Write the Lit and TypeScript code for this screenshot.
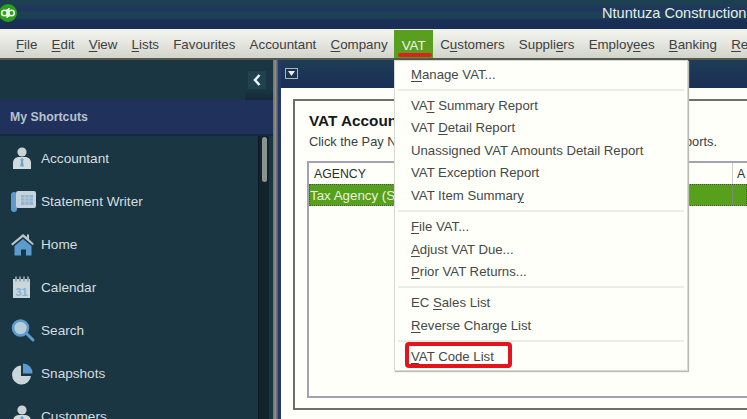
import { LitElement, html, css, svg } from "lit";
import { customElement } from "lit/decorators.js";

const U = (s: string, i: number, n = 1) =>
  html`<span>${s.slice(0, i)}<u>${s.slice(i, i + n)}</u>${s.slice(i + n)}</span>`;

const person = svg`<circle cx="11" cy="5" r="4.6" fill="#c9d3d8"/><path d="M2 22v-6c0-4 3-6 6-6h6c3 0 6 2 6 6v6z" fill="#d3dade"/><path d="M11 11l1.800 1.500-.9 2 1 5h-3.800l1-5-.9-2z" fill="#6ba3cf"/>`;
const icons: Record<string, unknown> = {
  Accountant: person,
  "Statement Writer": svg`<rect x="0" y="2" width="6" height="20" rx="3" fill="#5d9bcb"/><rect x="5" y="1" width="20" height="17" rx="2" fill="#c6d3da"/><rect x="10" y="5" width="12" height="10" fill="#8fb5d3"/><path d="M10 8h12M10 11h12M14 5v10M18 5v10" stroke="#c6d3da" stroke-width=".8"/>`,
  Home: svg`<path d="M0 11L12 1l4 3V1.500h2v4.500l5 5-1.500 1L12 4 1.500 12.500z" fill="#b9c6cc"/><path d="M3.500 13L12 6l8.500 7v9.500h-5.500v-6h-5v6H3.500z" fill="#5c9bcd"/>`,
  Calendar: svg`<rect x="2" y="3" width="17" height="19" fill="#cbd6da"/><path d="M5 .5v5M9 .5v5M13 .5v5M17 .5v5" stroke="#8fa4ae" stroke-width="1.800"/><text x="10.500" y="19.500" text-anchor="middle" font-family="Liberation Sans" font-weight="700" font-size="11" fill="#7fb3d8">31</text>`,
  Search: svg`<path d="M15 14l7 7" stroke="#5c9bcd" stroke-width="3" stroke-linecap="round"/><circle cx="9.500" cy="9" r="7.500" fill="#b7cdd8" stroke="#5c9bcd" stroke-width="2.600"/>`,
  Snapshots: svg`<path d="M10 3.500A9.500 9.500 0 1 0 20 14H10z" fill="#cbd6da"/><path d="M12 1.500A9.500 9.500 0 0 1 21.500 11.500H12z" fill="#5c9bcd"/>`,
  Customers: person,
};
const shortcuts = Object.keys(icons);

const menuGroups: unknown[][] = [
  [U("Manage VAT...", 0)],
  [U("VAT Summary Report", 2), U("VAT Detail Report", 4), "Unassigned VAT Amounts Detail Report", "VAT Exception Report", U("VAT Item Summary", 15)],
  [U("File VAT...", 0), U("Adjust VAT Due...", 0), U("Prior VAT Returns...", 0)],
  [U("EC Sales List", 3), U("Reverse Charge List", 0)],
  [U("VAT Code List", 0, 1)],
];

const menus: [unknown, string?][] = [
  [U("File", 0)], [U("Edit", 0)], [U("View", 0)], [U("Lists", 0)], ["Favourites"], ["Accountant"],
  [U("Company", 0)], ["VAT", "active"], [U("Customers", 1)], [U("Suppliers", 6)],
  [U("Employees", 6)], [U("Banking", 0)], [U("Reports", 0)],
];

@customElement("app-root")
export class AppRoot extends LitElement {
  static styles = css`
    :host { display: block; position: relative; width: 747px; height: 419px; overflow: hidden; background: #1a3642; font-family: "Liberation Sans", Arial, sans-serif; color: #2f3335; }
    u { text-underline-offset: 2px; text-decoration-thickness: 1px; }
    .title { height: 29px; box-sizing: border-box; display: flex; align-items: center; justify-content: space-between; overflow: hidden;
      background: linear-gradient(#1c3f52 0, #1c3f52 6px, #20355f 7px, #20355f 11px, #1d4054 12px, #1d4054 18px, #1a2f55 20px, #1a2f55 29px); }
    .logo { width: 18px; height: 22px; flex: none; margin-left: -1px; margin-top: -4px; }
    .company { font-size: 14.6px; color: #e6ecee; white-space: nowrap; width: 145px; flex: none; overflow: hidden; margin-top: -4px; }
    .menubar { height: 31px; box-sizing: border-box; display: flex; align-items: stretch; padding-left: 8.800px; border-top: 1px solid #f3f3ec; border-bottom: 2px solid #55584f; white-space: nowrap; overflow: hidden;
      background: linear-gradient(#f4f4ee 0, #e6e7e0 45%, #d2d4ca 100%); font-size: 13.33px; color: #3c4042; }
    .mi { padding: 0 7.100px; display: flex; align-items: center; position: relative; flex: none; }
    .mi.active { background: #5a9e20; color: #eef5e4; margin: 0 0 -2px -0.5px; padding: 0 7.500px; }
    .mi.active::after { content: ""; position: absolute; left: 4px; right: 1px; bottom: 3px; height: 4px; border-radius: 2px; background: #e0201c; }
    .body { height: 359px; display: flex; }
    .side { width: 273px; flex: none; display: flex; flex-direction: column; box-sizing: border-box; }
    .strip { height: 40px; flex: none; display: flex; justify-content: flex-end; background: #1a3642; }
    .collapse { width: 28px; height: 40px; background: linear-gradient(#1a3642 0, #1a3642 30px, #142838 100%); padding: 11px 0 0 3px; box-sizing: border-box; }
    .collapse span { width: 18px; height: 18px; background: #1f4150; display: flex; align-items: center; justify-content: center; }
    .collapse svg { width: 10px; height: 12px; }
    .head { height: 36px; flex: none; box-sizing: border-box; background: #20315c; border-bottom: 2px solid #14283a; display: flex; align-items: center; padding-left: 10px; font-size: 12.300px; font-weight: 700; color: #b8c2cc; }
    .listwrap { flex: 1; display: flex; min-height: 0; overflow: hidden; padding-right: 4px; }
    .list { flex: 1; padding-top: 1px; }
    .row { height: 43px; display: flex; align-items: center; font-size: 13.600px; color: #d5dde0; white-space: nowrap; }
    .row svg { width: 25px; height: 24px; margin: 0 5px 0 11px; flex: none; }
    .track { width: 11px; flex: none; background: #11242b; border-left: 1px solid #0c1a20; box-sizing: border-box; display: flex; justify-content: center; padding-top: 1px; }
    .thumb { width: 5px; height: 45px; background: #8a948f; border-radius: 3px; }
    .sash { width: 5px; flex: none; background: linear-gradient(90deg, #6d7370, #8b8e83 50%, #4b5050); }
    .main { flex: 1; min-width: 0; display: flex; flex-direction: column; background: #fffff9; border-left: 3px solid #24386a; overflow: hidden; }
    .mainhead { height: 28px; flex: none; box-sizing: border-box; background: linear-gradient(#1d3d55, #1a2f55); padding: 8px 0 0 4px; }
    .mainhead span { display: flex; width: 13px; height: 11px; box-sizing: border-box; border: 1.500px solid #a9b6bf; align-items: center; justify-content: center; background: #1d3450; }
    .mainhead svg { width: 7px; height: 5px; }
    .page { flex: 1; padding: 11px 0 9px 12px; display: flex; min-height: 0; }
    .panel { flex: 1; min-width: 0; border: 1px solid #6c6f6c; border-width: 2px 0 2px 2px; padding: 11px 0 0 14px; display: flex; flex-direction: column; overflow: hidden; }
    h1 { margin: 0; font-size: 15.300px; line-height: 18px; font-weight: 700; color: #16191b; white-space: nowrap; }
    .hint { margin: 4px 0 0; font-size: 12.800px; line-height: 16px; color: #3a3d3f; white-space: nowrap; display: flex; justify-content: space-between; padding-right: 30px; }
    .table { margin: 11px 0 10px -2px; flex: 1; border: solid #a3a2b0; border-width: 2px 0 2px 2px; display: flex; flex-direction: column; }
    .tr { display: flex; height: 21px; flex: none; box-sizing: border-box; }
    .th { font-size: 12.300px; color: #2b2e30; align-items: center; padding-left: 5px; justify-content: space-between; }
    .th i { font-style: normal; width: 15px; height: 100%; border-left: 1px solid #cfcfc8; padding-left: 4px; display: flex; align-items: center; box-sizing: border-box; }
    .sel { height: 22px; background: #57a01c; color: #e9f2dc; font-size: 13.33px; align-items: center; padding-left: 1px; justify-content: space-between; border-top: 1px solid #7f8c72; border-bottom: 1px solid #8f9a80; outline: 1px dotted #3f5f2a; outline-offset: -1px; }
    .sel i { width: 15px; height: 100%; border-left: 1px solid #7f8c72; box-sizing: border-box; }
    .menu { position: absolute; left: 394px; top: 60px; width: 294px; height: 311px; box-sizing: border-box; background: #fffff9; border: 1px solid #d6d9d0; box-shadow: 1px 1px 1px #b9bcb2; padding-top: 2px; font-size: 13.200px; color: #44484a; }
    .item { height: 22.500px; display: flex; align-items: center; padding-left: 16px; white-space: nowrap; }
    .sep { height: 8.700px; display: flex; align-items: center; padding: 0 3px; }
    .sep::before { content: ""; flex: 1; height: 2px; background: #ecece6; }
    .mark { position: relative; }
    .mark::after { content: ""; position: absolute; left: 10px; top: -3px; width: 107px; height: 26px; box-sizing: border-box; border: 4px solid #e3141c; border-radius: 4px; }
  `;

  render() {
    return html`
      <div class="title">
        <svg class="logo" viewBox="0 0 18 22">
          <circle cx="9" cy="11" r="9" fill="#2ca01c"/>
          <g fill="none" stroke="#e8f4e2" stroke-width="1.600">
            <circle cx="5.500" cy="11" r="2.800"/><circle cx="12.500" cy="11" r="2.800"/>
            <path d="M8.200 7v9M9.800 6v9"/>
          </g>
        </svg>
        <div class="company">Ntuntuza Construction Ltd</div>
      </div>
      <div class="menubar">
        ${menus.map(([l, c]) => html`<div class="mi ${c ?? ""}">${l}</div>`)}
      </div>
      <div class="body">
        <div class="side">
          <div class="strip">
            <div class="collapse"><span><svg viewBox="0 0 10 12"><path d="M7.500 1L3 6l4.500 5" fill="none" stroke="#eef2f3" stroke-width="2.600"/></svg></span></div>
          </div>
          <div class="head">My Shortcuts</div>
          <div class="listwrap">
            <div class="list">
              ${shortcuts.map((s) => html`<div class="row"><svg viewBox="0 0 25 24">${icons[s]}</svg>${s}</div>`)}
            </div>
            <div class="track"><div class="thumb"></div></div>
          </div>
        </div>
        <div class="sash"></div>
        <div class="main">
          <div class="mainhead"><span><svg viewBox="0 0 7 5"><path d="M0 0h7L3.500 5z" fill="#e6ecef"/></svg></span></div>
          <div class="page">
            <div class="panel">
              <h1>VAT Accounts</h1>
              <p class="hint"><span>Click the Pay Now button to pay</span><span>ports.</span></p>
              <div class="table">
                <div class="tr th"><span>AGENCY</span><i>A</i></div>
                <div class="tr sel"><span>Tax Agency (Sales)</span><i></i></div>
              </div>
            </div>
          </div>
        </div>
      </div>
      <div class="menu">
        ${menuGroups.map((g, gi) => html`
          ${gi ? html`<div class="sep"></div>` : ""}
          ${g.map((it, ii) => html`<div class="item ${gi === 4 && ii === 0 ? "mark" : ""}">${it}</div>`)}
        `)}
      </div>
    `;
  }
}
